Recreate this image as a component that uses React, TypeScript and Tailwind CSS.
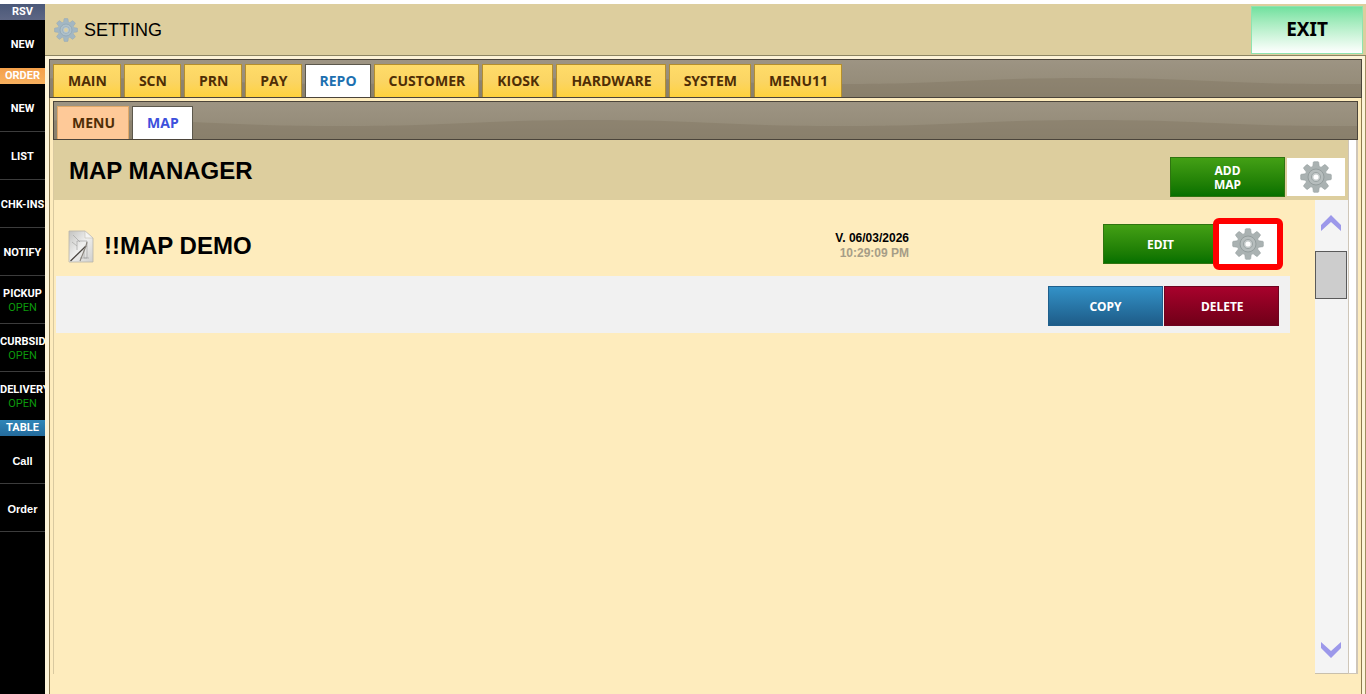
import { useState } from "react";
import clsx from "clsx";

type SideEntry = { kind: "header" | "item"; label: string; status?: string; tone?: string; plain?: boolean };

const SIDE: SideEntry[] = [
  { kind: "header", label: "RSV", tone: "h-4 bg-linear-to-b from-[#4a5878] to-[#5d6684]" },
  { kind: "item", label: "NEW", tone: "h-12" },
  { kind: "header", label: "ORDER", tone: "h-4 bg-linear-to-b from-[#f5a04a] to-[#f7b05e]" },
  { kind: "item", label: "NEW", tone: "h-12 border-b border-[#3c3c3c]" },
  { kind: "item", label: "LIST", tone: "h-12 border-b border-[#3c3c3c]" },
  { kind: "item", label: "CHK-INS", tone: "h-12 border-b border-[#3c3c3c]" },
  { kind: "item", label: "NOTIFY", tone: "h-12 border-b border-[#3c3c3c]" },
  { kind: "item", label: "PICKUP", status: "OPEN", tone: "h-12 border-b border-[#3c3c3c]" },
  { kind: "item", label: "CURBSIDE", status: "OPEN", tone: "h-12 border-b border-[#3c3c3c]" },
  { kind: "item", label: "DELIVERY", status: "OPEN", tone: "h-12" },
  { kind: "header", label: "TABLE", tone: "h-4 bg-linear-to-b from-[#2f86b8] to-[#246b9c]" },
  { kind: "item", label: "Call", tone: "h-12 border-b border-[#3c3c3c]", plain: true },
  { kind: "item", label: "Order", tone: "h-12 border-b border-[#3c3c3c]", plain: true },
];

const TABS = ["MAIN", "SCN", "PRN", "PAY", "REPO", "CUSTOMER", "KIOSK", "HARDWARE", "SYSTEM", "MENU11"];
const SUB_TABS = ["MENU", "MAP"];
const TEETH = [0, 45, 90, 135, 180, 225, 270, 315];

function Gear({ className, blue }: { className?: string; blue?: boolean }) {
  const body = blue ? "#a3b7c3" : "#aab2b2";
  const edge = blue ? "#8fa5b3" : "#949d9d";
  return (
    <svg viewBox="0 0 32 32" className={className} aria-hidden="true">
      {TEETH.map((deg) => (
        <path
          key={deg}
          d="M12.6 7 L13.3 1.4 Q13.4 0.7 14.1 0.7 H17.9 Q18.6 0.7 18.7 1.4 L19.4 7 Z"
          fill={body}
          stroke={edge}
          strokeWidth="0.6"
          transform={`rotate(${deg} 16 16)`}
        />
      ))}
      <circle cx="16" cy="16" r="11.2" fill={body} />
      <circle cx="16" cy="16" r="8" fill={blue ? "#aec0ca" : "#b6bdbd"} stroke={edge} strokeWidth="1" />
      <circle cx="16" cy="16" r="4.6" fill={blue ? "#b9cad3" : "#c3c9c9"} stroke={edge} strokeWidth="0.8" />
      <circle cx="16" cy="16" r="2.6" fill={blue ? "#ddce9e" : "#ffffff"} />
    </svg>
  );
}

function PlanIcon() {
  return (
    <svg viewBox="0 0 26 33" className="h-[33px] w-[26px] shrink-0" aria-hidden="true">
      <defs>
        <linearGradient id="sheet" x1="0" y1="0" x2="1" y2="1">
          <stop offset="0" stopColor="#c2c2c0" />
          <stop offset="0.5" stopColor="#efefee" />
          <stop offset="1" stopColor="#cfcfcd" />
        </linearGradient>
      </defs>
      <path d="M1 1H17L25 8V32H1Z" fill="url(#sheet)" stroke="#b9b5a8" strokeWidth="0.8" />
      <path d="M17 1V8H25Z" fill="#f4f4f3" stroke="#c2bfb5" strokeWidth="0.6" />
      <path d="M9 11H19V28H16M9 11V20M5 5L12 12M4 12L9 16" fill="none" stroke="#a5a5a3" strokeWidth="0.7" />
      <path d="M12 28H21M16 20V28" fill="none" stroke="#a5a5a3" strokeWidth="0.7" />
      <path d="M2.5 31L18 16" stroke="#4a4540" strokeWidth="1.3" />
      <path d="M12 31L18 16L19 12" fill="none" stroke="#88837c" strokeWidth="1.1" />
    </svg>
  );
}

function Wave({ id }: { id: string }) {
  return (
    <svg className="absolute inset-0 h-full w-full" aria-hidden="true">
      <defs>
        <pattern id={id} x="37" y="0" width="500" height="38" patternUnits="userSpaceOnUse">
          <path d="M0 18C125 18 125 24 250 24S375 18 500 18V38H0Z" fill="#7b705b" fillOpacity="0.35" />
        </pattern>
      </defs>
      <rect width="100%" height="100%" fill={`url(#${id})`} />
    </svg>
  );
}

function ActionButton({ label, tone }: { label: string; tone: string }) {
  return (
    <button
      type="button"
      className={clsx(
        "h-10 w-[115px] shrink-0 border px-9 pt-0.5 font-['Noto_Sans',sans-serif] text-xs leading-[14px] font-bold text-white",
        tone
      )}
    >
      {label}
    </button>
  );
}

const GREEN = "border-[#2f7410] bg-linear-to-b from-[#43a015] to-[#047000]";

function Sidebar() {
  return (
    <nav className="w-[45px] shrink-0 bg-black font-[Roboto,sans-serif] text-[11px] font-bold text-white">
      {SIDE.map((s, i) =>
        s.kind === "header" ? (
          <div key={i} className={clsx("flex items-center justify-center", s.tone)}>
            {s.label}
          </div>
        ) : (
          <button
            key={i}
            type="button"
            className={clsx(
              "flex w-full flex-col items-center justify-center overflow-hidden pt-0.5 leading-[14px]",
              s.plain && "font-['Liberation_Sans',sans-serif]",
              s.tone
            )}
          >
            <span className={clsx(s.label.length > 7 && "self-start")}>{s.label}</span>
            {s.status && <span className="font-normal text-[#0c9a0c]">{s.status}</span>}
          </button>
        )
      )}
    </nav>
  );
}

function Scrollbar() {
  return (
    <div className="flex w-[33px] flex-col items-center border-b border-[#c9c0ac] bg-[#f4f4f4] pt-[15px] pr-px pb-[15px]">
      <button type="button" aria-label="Scroll up">
        <svg viewBox="0 0 20 16" className="block h-4 w-5">
          <path d="M0 10L10 0L20 10V16L10 7L0 16Z" fill="#9c98ea" />
        </svg>
      </button>
      <div className="mt-5 h-12 w-8 border border-[#5a5a5a] bg-[#cdcdcd]" />
      <button type="button" aria-label="Scroll down" className="mt-auto">
        <svg viewBox="0 0 20 16" className="block h-4 w-5">
          <path d="M0 6L10 16L20 6V0L10 9L0 0Z" fill="#9c98ea" />
        </svg>
      </button>
    </div>
  );
}

export default function App() {
  const [tab, setTab] = useState("REPO");
  const [subTab, setSubTab] = useState("MAP");
  const [open, setOpen] = useState(true);

  return (
    <div className="flex min-h-screen bg-white pt-1 font-['Liberation_Sans',Arial,sans-serif] text-black">
      <Sidebar />

      <div className="flex min-w-0 flex-1 flex-col bg-[#feecbd]">
        <header className="flex h-[52px] items-center border-b border-[#8c8462] bg-[#ddce9e] pr-[3px] pl-[9px]">
          <Gear className="h-6 w-6" blue />
          <h1 className="ml-1.5 text-lg">SETTING</h1>
          <button
            type="button"
            className="ml-auto h-12 w-28 border border-[#8fe3b0] bg-linear-to-b from-[#70e19f] to-white font-['Noto_Sans',sans-serif] text-[19px] font-bold"
          >
            EXIT
          </button>
        </header>

        <div className="flex flex-1 flex-col border-r border-[#a08f60] bg-[#fdf3d8] pt-[3px] pr-[3px] pl-1">
          {/* Main tabs */}
          <div className="relative flex h-[39px] items-end gap-[3px] border border-[#4b443a] bg-linear-to-b from-[#9d9483] to-[#918874] pl-[3px]">
            <Wave id="wave-main" />
            {TABS.map((t) => (
              <button
                key={t}
                type="button"
                onClick={() => setTab(t)}
                className={clsx(
                  "relative h-[33px] border border-b-0 pr-[13px] pl-3.5 font-['Open_Sans',sans-serif] text-sm font-bold",
                  t === tab
                    ? "border-[#5c584c] bg-white text-[#1d70b0]"
                    : "border-[#b58f2c] bg-linear-to-b from-[#ffdc6a] via-[#fbd563] to-[#ffd23c] text-[#4f2e06]"
                )}
              >
                {t}
              </button>
            ))}
          </div>

          <div className="flex flex-1 flex-col border-x border-[#8e7b50] bg-[#feecbd] pt-[3px] pr-[3px] pb-5 pl-[3px]">
            {/* Sub tabs */}
            <div className="relative flex h-[39px] items-end gap-[3px] border border-[#4b443a] bg-linear-to-b from-[#9d9483] to-[#918874] pl-[3px]">
              <Wave id="wave-sub" />
              {SUB_TABS.map((t) => (
                <button
                  key={t}
                  type="button"
                  onClick={() => setSubTab(t)}
                  className={clsx(
                    "relative h-[33px] border border-b-0 pr-[13px] pl-3.5 font-['Open_Sans',sans-serif] text-sm font-bold",
                    t === subTab
                      ? "border-[#5c584c] bg-white text-[#3d50dc]"
                      : "border-[#e0a868] bg-[#fec998] text-[#4f2e06]"
                  )}
                >
                  {t}
                </button>
              ))}
            </div>

            <div className="flex flex-1 border-l border-[#d9c9a0]">
              <div className="flex min-w-0 flex-1 flex-col">
                <div className="flex h-[60px] items-center bg-[#ddce9e] pt-0.5 pr-[3px] pl-[15px]">
                  <h2 className="text-2xl font-bold">MAP MANAGER</h2>
                  <div className="mt-3 ml-auto flex items-center gap-0.5">
                    <ActionButton label="ADD MAP" tone={GREEN} />
                    <button
                      type="button"
                      aria-label="Map settings"
                      className="flex h-[38px] w-[58px] items-center justify-center bg-white"
                    >
                      <Gear className="h-8 w-8" />
                    </button>
                  </div>
                </div>

                <div className="flex flex-1">
                  <div className="min-w-0 flex-1">
                    <div className="flex h-[70px] items-end pr-8 pl-3.5">
                      <div className="flex h-12 flex-1 items-center">
                        <PlanIcon />
                        <h3 className="ml-2.5 flex-1 text-2xl font-bold">!!MAP DEMO</h3>
                        <p className="mr-[194px] text-right text-xs leading-[15px] font-bold">
                          V. 06/03/2026
                          <span className="block text-[#a69d87]">10:29:09 PM</span>
                        </p>
                      </div>
                      <div className="flex h-[52px] items-center">
                        <ActionButton label="EDIT" tone={GREEN} />
                        <button
                          type="button"
                          aria-label="Map options"
                          onClick={() => setOpen(!open)}
                          className="relative -ml-[5px] flex h-[52px] w-[70px] items-center justify-center rounded-md border-6 border-[#ff0000] bg-[#ff0000]"
                        >
                          <span className="flex h-full w-full items-center justify-center bg-white">
                            <Gear className="h-8 w-8" />
                          </span>
                        </button>
                      </div>
                    </div>

                    {open && (
                      <div className="mt-1.5 mr-[25px] ml-0.5 flex h-[57px] items-center justify-end gap-px bg-[#f1f1f1] pt-[3px] pr-[11px]">
                        <ActionButton
                          label="COPY"
                          tone="border-[#1f5f8c] bg-linear-to-b from-[#3392c8] to-[#1e5c88]"
                        />
                        <ActionButton
                          label="DELETE"
                          tone="border-[#6d0420] bg-linear-to-b from-[#a8022c] to-[#700018]"
                        />
                      </div>
                    )}
                  </div>
                  <Scrollbar />
                </div>
              </div>
              <div className="w-2.5 border-r-2 border-b border-l border-[#cfc6b8] bg-white" />
            </div>
          </div>
        </div>
      </div>
    </div>
  );
}
